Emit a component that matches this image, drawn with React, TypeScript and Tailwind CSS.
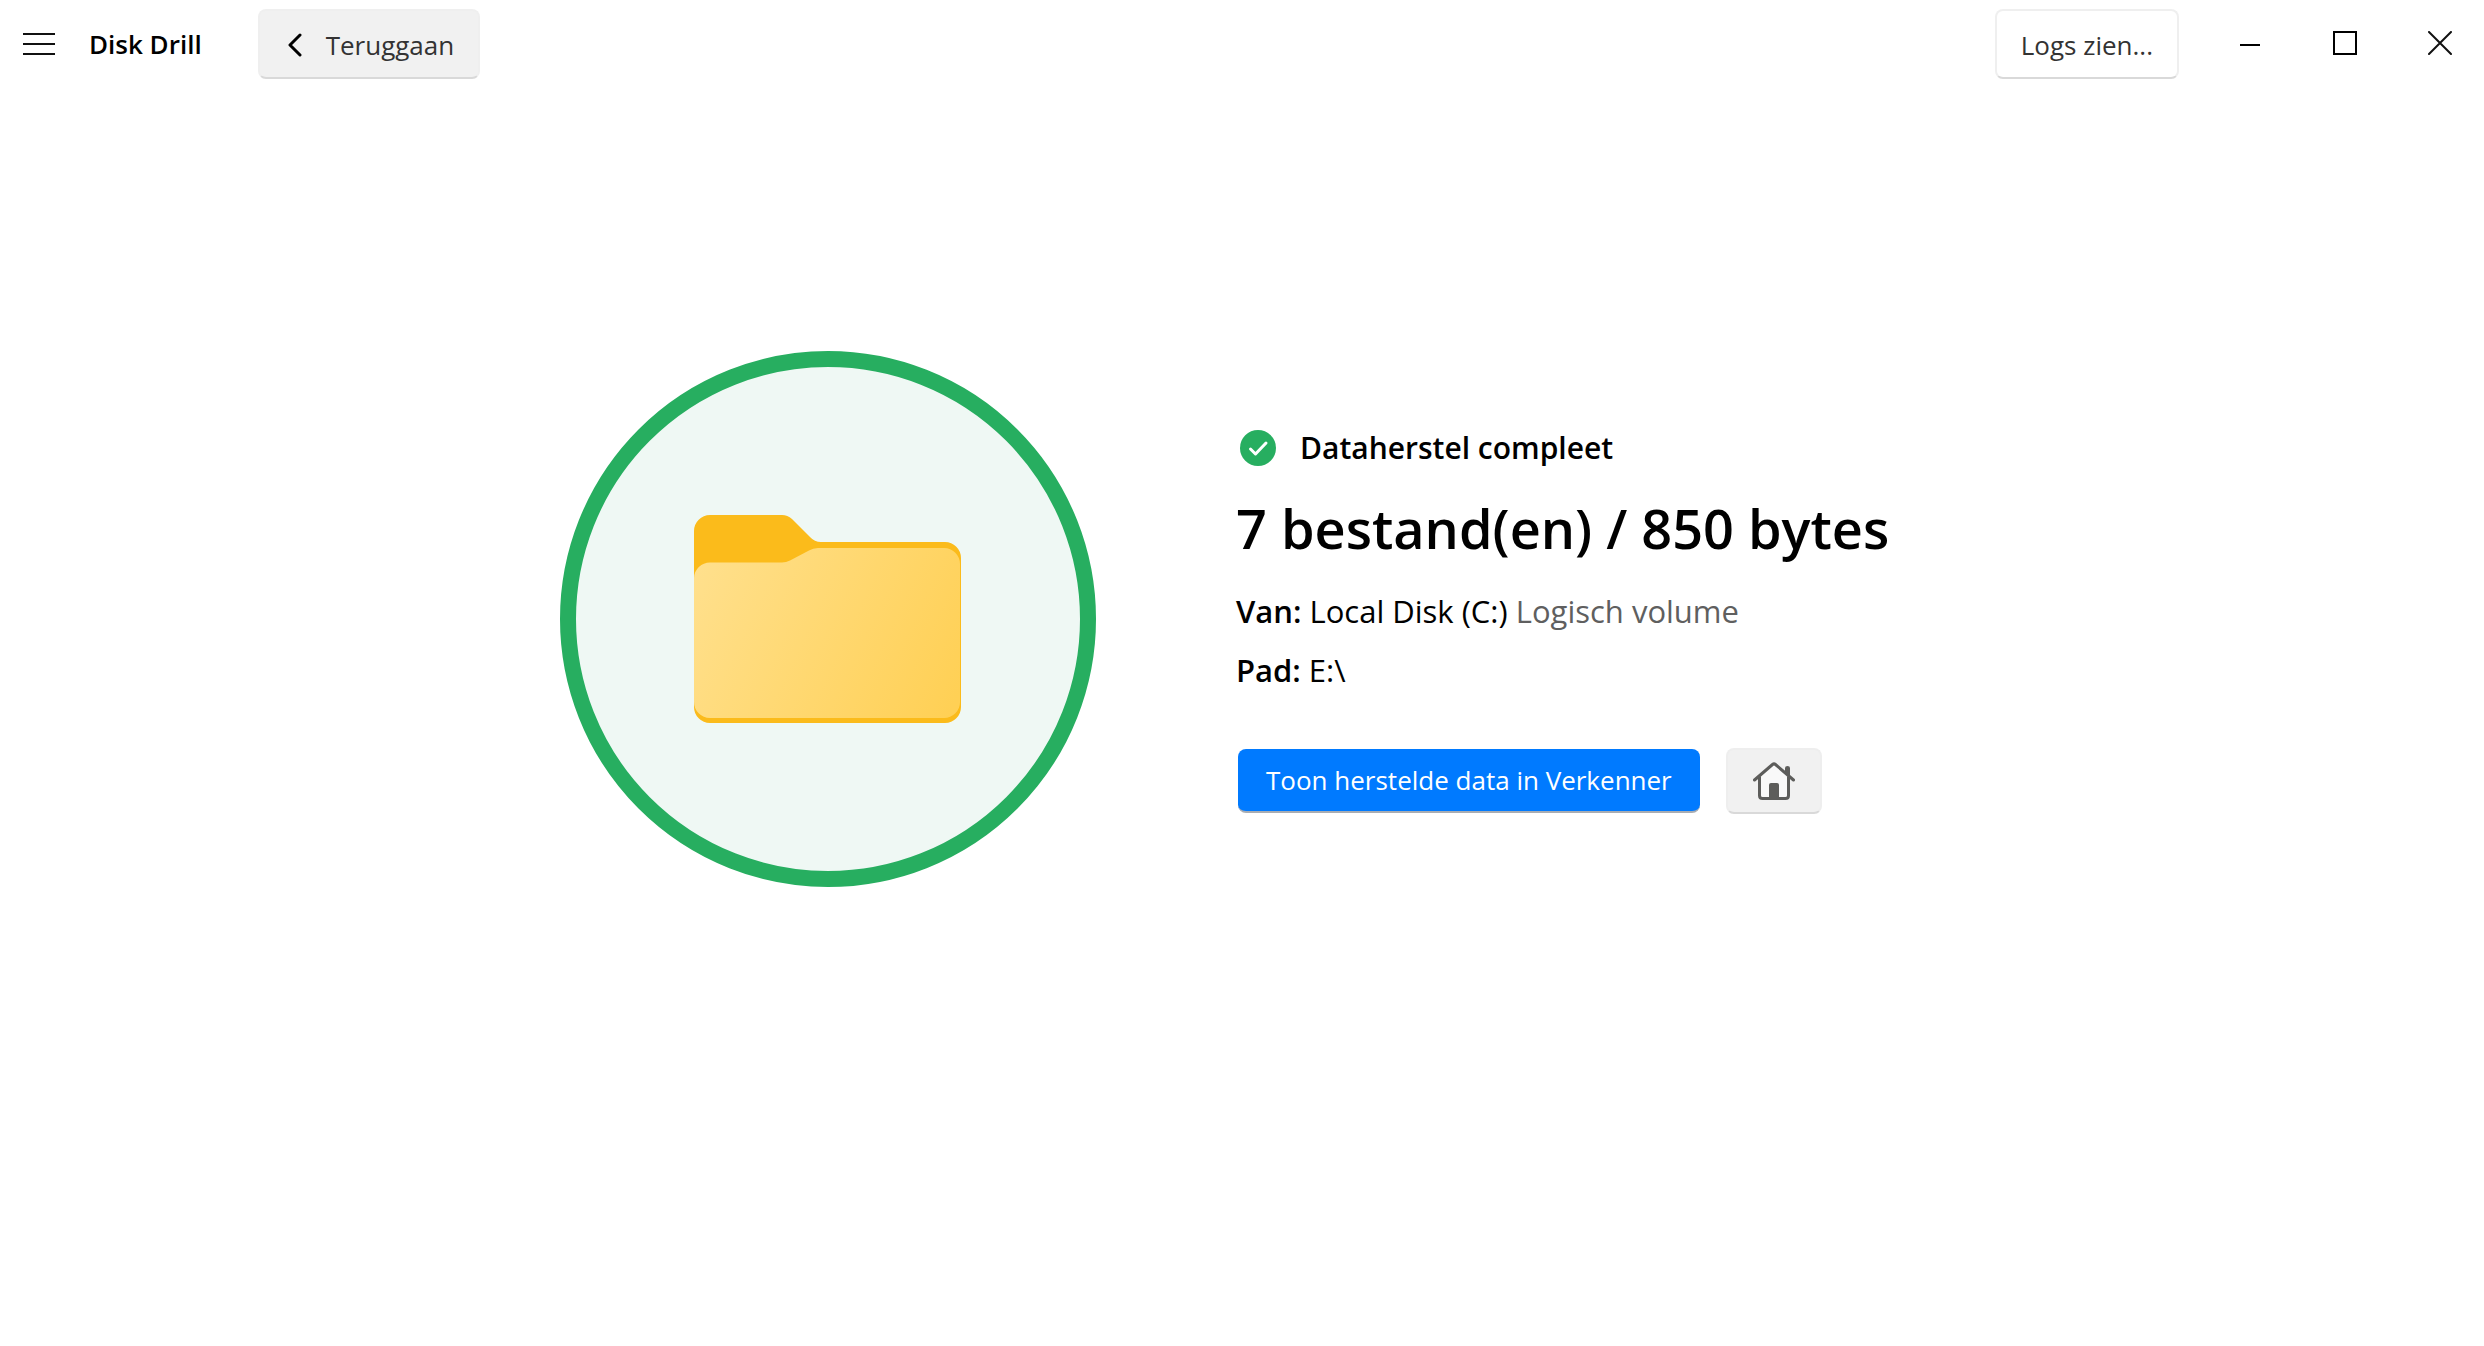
import type { ReactNode } from "react";

const SUMMARY = {
  status: "Dataherstel compleet",
  result: "7 bestand(en) / 850 bytes",
  source: "Local Disk (C:)",
  sourceKind: "Logisch volume",
  path: "E:\\",
};

function MenuIcon() {
  return (
    <svg width="32" height="22" viewBox="0 0 32 22" fill="none" stroke="#111" strokeWidth="2" aria-hidden>
      <path d="M0 1h32M0 11h32M0 21h32" />
    </svg>
  );
}

function BackIcon() {
  return (
    <svg width="14" height="24" viewBox="0 0 14 24" fill="none" stroke="#000" strokeWidth="3" strokeLinecap="round" strokeLinejoin="round" aria-hidden>
      <path d="M12 2 2 12l10 10" />
    </svg>
  );
}

function CheckBadge() {
  return (
    <svg width="36" height="36" viewBox="0 0 36 36" fill="none" aria-hidden>
      <circle cx="18" cy="18" r="18" fill="#27ae60" />
      <path d="m10.5 19 5 5L26 13" stroke="#fff" strokeWidth="3" strokeLinecap="round" strokeLinejoin="round" />
    </svg>
  );
}

function HomeIcon() {
  return (
    <svg width="42" height="38" viewBox="0 0 42 38" fill="none" aria-hidden>
      <path d="M6.5 15v18.500q0 3 3 3h23q3 0 3-3V15L21 2.500z" fill="#f9f9f9" />
      <path d="M6.5 14.500v19q0 3 3 3h23q3 0 3-3v-19" stroke="#5d5d5b" strokeWidth="3" />
      <path d="M1.500 18 19.500 2.500q1.500-1.200 3 0L40.500 18" stroke="#5d5d5b" strokeWidth="3" strokeLinecap="round" />
      <path d="M32 6q0-2 2.500-2T37 6v8.500l-5-4z" fill="#5d5d5b" />
      <path d="M16 36V23q0-2 2-2h6q2 0 2 2v13z" fill="#5d5d5b" />
    </svg>
  );
}

function FolderIcon() {
  return (
    <svg width="268" height="208" viewBox="0 0 268 208" aria-hidden>
      <defs>
        <linearGradient id="folder-front" x1="0" y1="48" x2="267" y2="175" gradientUnits="userSpaceOnUse">
          <stop offset="0" stopColor="#ffe08d" />
          <stop offset="1" stopColor="#ffd055" />
        </linearGradient>
      </defs>
      <path
        d="M0 16A16 16 0 0 1 16 0H88Q93.500 0 98 4L116 22Q120.500 27 127 27H251A16 16 0 0 1 267 43V192A16 16 0 0 1 251 208H16A16 16 0 0 1 0 192Z"
        fill="#fbbb1b"
      />
      <path
        d="M0 63A16 16 0 0 1 16 47.500H88Q92 47.500 96 45.500L115 35.500Q119 33 124 33H250A16 16 0 0 1 266 49V187A16 16 0 0 1 250 203H16A16 16 0 0 1 0 187Z"
        fill="url(#folder-front)"
      />
    </svg>
  );
}

function WindowButton({ label, children }: { label: string; children: ReactNode }) {
  return (
    <button type="button" aria-label={label} className="flex h-[86px] w-[88px] items-center justify-center hover:bg-black/5">
      {children}
    </button>
  );
}

function TitleBar() {
  return (
    <header className="flex h-[88px] items-center">
      <button type="button" aria-label="Menu" className="ml-[23px]">
        <MenuIcon />
      </button>
      <h1 className="ml-[34px] text-[26px] font-semibold">Disk Drill</h1>
      <button
        type="button"
        className="ml-14 flex h-[70px] items-center gap-6 rounded-lg border-2 border-[#efefef] border-b-[#d9d9d9] bg-[#f1f1f1] px-6 pt-0.5 pl-7 text-[26px] text-[#333]"
      >
        <BackIcon />
        Teruggaan
      </button>

      <button
        type="button"
        className="mr-[27px] ml-auto h-[70px] rounded-lg border-2 border-[#efefef] border-b-[#d9d9d9] bg-white px-6 pt-0.5 text-[26px] text-[#333]"
      >
        Logs zien...
      </button>
      <div className="flex gap-[7px] self-start">
        <WindowButton label="Minimaliseren">
          <svg width="24" height="24" viewBox="0 0 24 24" stroke="#000" strokeWidth="2" aria-hidden>
            <path d="M2 14h20" />
          </svg>
        </WindowButton>
        <WindowButton label="Maximaliseren">
          <svg width="24" height="24" viewBox="0 0 24 24" fill="none" stroke="#000" strokeWidth="2" aria-hidden>
            <path d="M1 1h22v22H1z" />
          </svg>
        </WindowButton>
        <WindowButton label="Sluiten">
          <svg width="24" height="24" viewBox="0 0 24 24" stroke="#111" strokeWidth="2" strokeLinecap="round" aria-hidden>
            <path d="m1 1 22 22M23 1 1 23" />
          </svg>
        </WindowButton>
      </div>
    </header>
  );
}

export default function App() {
  return (
    <div className="min-h-screen bg-white font-['Open_Sans','Noto_Sans',sans-serif] text-black">
      <TitleBar />

      <main className="flex items-center justify-center gap-[140px] pt-[263px]">
        <div className="flex size-[536px] shrink-0 items-center justify-center rounded-full border-16 border-[#27ae60] bg-[#eff8f4]">
          <FolderIcon />
        </div>

        <section className="w-[688px] pt-1">
          <div className="flex items-center gap-6 pl-1">
            <CheckBadge />
            <p className="text-[30px] leading-10 font-semibold">{SUMMARY.status}</p>
          </div>
          <h2 className="mt-5 text-[54px] leading-[80px] font-semibold whitespace-nowrap">{SUMMARY.result}</h2>
          <dl className="mt-[14px] text-[31px] leading-[59px]">
            <div className="flex gap-2">
              <dt className="font-semibold">Van:</dt>
              <dd>
                {SUMMARY.source} <span className="text-[#5f5f5f]">{SUMMARY.sourceKind}</span>
              </dd>
            </div>
            <div className="flex gap-2">
              <dt className="font-semibold">Pad:</dt>
              <dd>{SUMMARY.path}</dd>
            </div>
          </dl>

          <div className="mt-12 flex items-center gap-[26px] pl-0.5">
            <button
              type="button"
              className="h-16 rounded-lg border-b-2 border-[#a9adb3] bg-[#007aff] px-7 text-[26px] text-white"
            >
              Toon herstelde data in Verkenner
            </button>
            <button
              type="button"
              aria-label="Startpagina"
              className="flex h-[66px] w-24 items-center justify-center rounded-lg border-2 border-[#eeeeee] border-b-[#d9d9d9] bg-[#f1f1f1]"
            >
              <HomeIcon />
            </button>
          </div>
        </section>
      </main>
    </div>
  );
}
